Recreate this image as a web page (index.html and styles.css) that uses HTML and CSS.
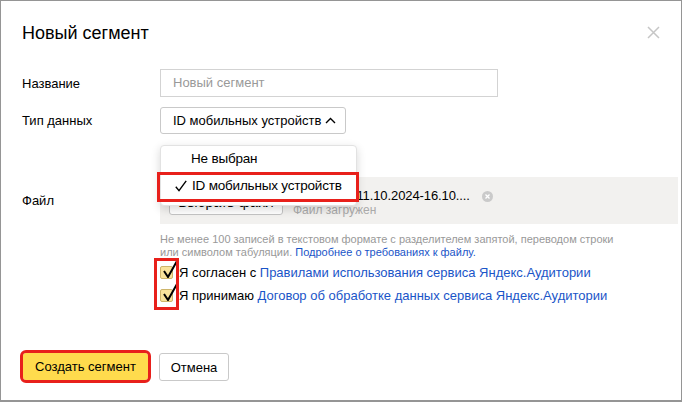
FILE: index.html
```html
<!DOCTYPE html>
<html lang="ru">
<head>
<meta charset="utf-8">
<title>Новый сегмент</title>
<link rel="stylesheet" href="styles.css">
</head>
<body>
<div class="dialog">
  <div class="head">
    <h1 class="title">Новый сегмент</h1>
    <svg class="close" width="13" height="13" viewBox="0 0 13 13"><path d="M1 1L12 12M12 1L1 12" stroke="#c6c6c6" stroke-width="1.5" fill="none"/></svg>
  </div>
  <div class="form">
    <div class="row">
      <div class="label">Название</div>
      <div class="input">Новый сегмент</div>
    </div>
    <div class="row">
      <div class="label">Тип данных</div>
      <div class="select-wrap">
        <div class="select">
          <span>ID мобильных устройств</span>
          <svg class="chev" width="11" height="7" viewBox="0 0 11 7"><path d="M1 6L5.5 1.5L10 6" stroke="#000" stroke-width="1.4" fill="none"/></svg>
        </div>
        <div class="popup">
          <div class="item">Не выбран</div>
          <div class="item item-checked hl">
            <svg class="tick" width="12" height="12" viewBox="0 0 12 12"><path d="M0.8 6.8L4 10.6L11.2 0.8" stroke="#000" stroke-width="1.4" fill="none"/></svg>
            ID мобильных устройств
          </div>
        </div>
      </div>
    </div>
    <div class="row row-file">
      <div class="label">Файл</div>
      <div class="filebox">
        <div class="btn btn-file">Выбрать файл</div>
        <div class="fileinfo">
          <div class="fname">gaid_mob_11.10.2024-16.10....</div>
          <div class="fstatus">Файл загружен</div>
        </div>
        <svg class="remove" width="11" height="11" viewBox="0 0 11 11"><circle cx="5.5" cy="5.5" r="5.5" fill="#cacaca"/><path d="M3.5 3.5L7.5 7.5M7.5 3.5L3.5 7.5" stroke="#fff" stroke-width="1.3"/></svg>
      </div>
    </div>
    <div class="row row-help">
      <div></div>
      <div class="help">Не менее 100 записей в текстовом формате с разделителем запятой, переводом строки<br>или символом табуляции. <span class="link">Подробнее о требованиях к файлу.</span></div>
    </div>
    <div class="row row-agree">
      <div></div>
      <div class="agree">
        <div class="agree-line"><span class="cb"><svg class="cb-tick" width="16" height="18" viewBox="0 0 16 18"><path d="M2 11L6 17L15 1" stroke="#000" stroke-width="2" fill="none"/></svg></span>Я согласен с <span class="link">Правилами использования сервиса Яндекс.Аудитории</span></div>
        <div class="agree-line"><span class="cb"><svg class="cb-tick" width="16" height="18" viewBox="0 0 16 18"><path d="M2 11L6 17L15 1" stroke="#000" stroke-width="2" fill="none"/></svg></span>Я принимаю <span class="link">Договор об обработке данных сервиса Яндекс.Аудитории</span></div>
        <div class="mark"></div>
      </div>
    </div>
  </div>
  <div class="actions">
    <div class="btn btn-primary hl">Создать сегмент</div>
    <div class="btn btn-cancel">Отмена</div>
  </div>
</div>
</body>
</html>
```

FILE: styles.css
```css
* { box-sizing: border-box; }
html, body { margin: 0; padding: 0; background: #fff; }
body { font-family: "Liberation Sans", Arial, sans-serif; font-size: 13px; color: #000; }

.dialog {
  width: 682px;
  height: 402px;
  border: 1px solid #959595;
  border-bottom-width: 2px;
  padding: 21px 3px 0 21px;
}

.head { display: flex; justify-content: space-between; align-items: flex-start; }
.title { margin: 0; font-size: 18px; line-height: 22px; font-weight: normal; }
.close { margin-top: 4px; margin-right: 18px; }

.form { margin-top: 25px; display: flex; flex-direction: column; }
.row { display: grid; grid-template-columns: 138px 1fr; align-items: center; }
.row + .row { margin-top: 10px; }
.label { font-size: 13px; }

.input {
  width: 338px;
  height: 28px;
  border: 1px solid #d3d3d3;
  padding-left: 12px;
  line-height: 26px;
  color: #999;
}

.select-wrap { position: relative; }
.select {
  display: inline-flex;
  align-items: center;
  height: 27px;
  border: 1px solid #c9c9c9;
  border-radius: 3px;
  padding: 0 9px 0 12px;
  gap: 4px;
}
.chev { margin-top: -1px; }

.popup {
  position: absolute;
  top: 38px;
  left: 0;
  width: 197px;
  background: #fff;
  border-radius: 4px;
  border: 1px solid #e2e2e2;
  box-shadow: 0 3px 10px rgba(0,0,0,0.16);
  padding: 1px 0 6px;
  z-index: 2;
}
.item { height: 24px; line-height: 24px; padding-left: 30px; font-size: 13.5px; letter-spacing: -0.2px; }
.item-checked { position: relative; margin-top: 4px; width: 196px; margin-left: -1px; padding-left: 32px; line-height: 22px; }
.tick { position: absolute; left: 15px; top: 5px; }
.hl { outline: 3px solid #e8201b; }

.row.row-file { margin-top: 43px; }
.filebox {
  display: flex;
  align-items: flex-start;
  height: 47px;
  background: #f2f1ef;
  padding: 11px 0 0 9px;
}
.btn {
  height: 27px;
  border-radius: 3px;
  display: flex;
  align-items: center;
  justify-content: center;
  font-size: 13px;
}
.btn-file { width: 114px; background: #fff; border: 1px solid #c4c4c4; font-size: 14px; }
.fileinfo { margin-left: 10px; margin-top: 1px; }
.fname { font-size: 13px; line-height: 14px; letter-spacing: -0.1px; }
.fstatus { font-size: 12px; line-height: 12px; color: #aaa; margin-top: 1px; }
.remove { margin-left: 12px; margin-top: 3px; }

.row.row-help { margin-top: 9px; }
.help { font-size: 11px; line-height: 13px; color: #999; }
.link { color: #1a55c8; }

.row.row-agree { margin-top: 2px; }
.agree { position: relative; }
.agree-line { height: 23px; line-height: 23px; font-size: 13px; white-space: nowrap; }
.cb {
  position: relative;
  display: inline-block;
  vertical-align: -2px;
  width: 13px;
  height: 13px;
  margin-right: 6px;
  border: 1px solid #cdb56b;
  border-radius: 2px;
  background: #f8e39b;
}
.cb-tick { position: absolute; left: 1px; top: -7px; }
.mark {
  position: absolute;
  left: -6px;
  top: -3px;
  width: 25px;
  height: 52px;
  border: 3px solid #e8201b;
}

.actions { display: flex; gap: 11px; margin-top: 46px; padding-left: 1px; }
.btn-primary { width: 125px; background: #ffdb4d; }
.btn-cancel { width: 70px; height: 28px; border: 1px solid #c9c9c9; background: #fff; }
```
